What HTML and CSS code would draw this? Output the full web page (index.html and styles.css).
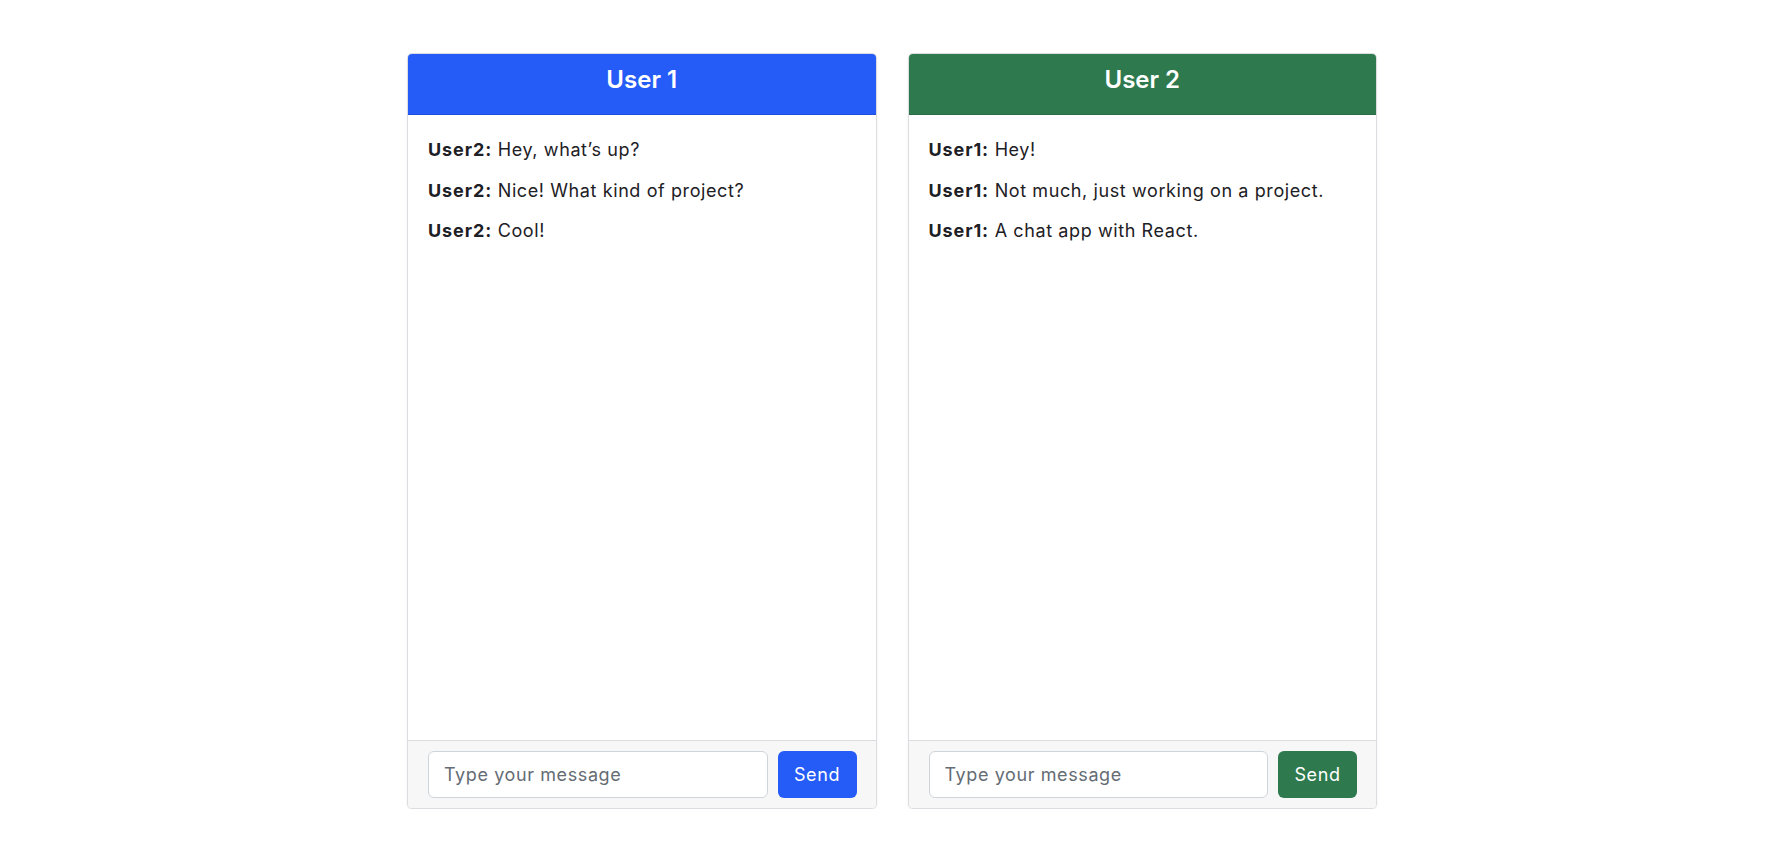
FILE: index.html
```html
<!DOCTYPE html>
<html lang="en">
<head>
<meta charset="utf-8">
<title>Chat</title>
<link rel="stylesheet" href="styles.css">
</head>
<body>
<main class="page">
  <section class="chat chat-blue">
    <header class="chat-header"><h4 class="chat-title">User 1</h4></header>
    <div class="chat-body">
      <p class="msg"><strong>User2:</strong> Hey, what’s up?</p>
      <p class="msg"><strong>User2:</strong> Nice! What kind of project?</p>
      <p class="msg"><strong>User2:</strong> Cool!</p>
    </div>
    <footer class="chat-footer">
      <input class="chat-input" type="text" placeholder="Type your message">
      <button class="chat-send" type="button">Send</button>
    </footer>
  </section>
  <section class="chat chat-green">
    <header class="chat-header"><h4 class="chat-title">User 2</h4></header>
    <div class="chat-body">
      <p class="msg"><strong>User1:</strong> Hey!</p>
      <p class="msg"><strong>User1:</strong> Not much, just working on a project.</p>
      <p class="msg"><strong>User1:</strong> A chat app with React.</p>
    </div>
    <footer class="chat-footer">
      <input class="chat-input" type="text" placeholder="Type your message">
      <button class="chat-send" type="button">Send</button>
    </footer>
  </section>
</main>
</body>
</html>
```

FILE: styles.css
```css
* { box-sizing: border-box; }
html, body { margin: 0; padding: 0; background: #ffffff; }
body {
  font-family: Inter, "Noto Sans", "Liberation Sans", sans-serif;
  font-size: 18px;
  color: #1d2024;
}
.page {
  display: flex;
  justify-content: center;
  gap: 31px;
  padding: 53px 0 0 9px;
}
.chat {
  width: 469.5px;
  height: 756px;
  display: flex;
  flex-direction: column;
  border: 1px solid #dcdde0;
  border-radius: 5px;
  overflow: hidden;
  box-shadow: 0 1px 3px rgba(0,0,0,0.06);
  background: #fff;
}
.chat-header {
  flex: 0 0 auto;
  height: 61px;
  padding: 11px 20px 0;
  text-align: center;
  color: #fff;
  border-bottom: 1px solid rgba(0,0,0,0.12);
}
.chat-blue .chat-header { background: #255bf6; }
.chat-green .chat-header { background: #2e7a4e; }
.chat-title {
  margin: 0;
  font-size: 24px;
  font-weight: 600;
  line-height: 29px;
}
.chat-body {
  flex: 1 1 auto;
  padding: 21px 20px;
}
.msg {
  margin: 0 0 13.5px;
  line-height: 27px;
  letter-spacing: 0.6px;
}
.msg strong { font-weight: 700; letter-spacing: 0.9px; }
.chat-footer {
  flex: 0 0 auto;
  display: flex;
  gap: 10px;
  padding: 10px 19px 10px 20px;
  background: #f7f7f7;
  border-top: 1px solid #dcdde0;
}
.chat-input {
  flex: 1 1 auto;
  min-width: 0;
  height: 47px;
  padding: 0 15px;
  font-family: inherit;
  font-size: 18px;
  letter-spacing: 0.6px;
  color: #212529;
  background: #fff;
  border: 1px solid #ced4da;
  border-radius: 6px;
  outline: none;
}
.chat-input::placeholder { color: #656c74; }
.chat-send {
  flex: 0 0 79px;
  height: 47px;
  padding: 0;
  font-family: inherit;
  font-size: 18px;
  letter-spacing: 0.6px;
  color: #fff;
  border: 0;
  border-radius: 6px;
  cursor: pointer;
}
.chat-blue .chat-send { background: #255bf6; }
.chat-green .chat-send { background: #2e7a4e; }
```
